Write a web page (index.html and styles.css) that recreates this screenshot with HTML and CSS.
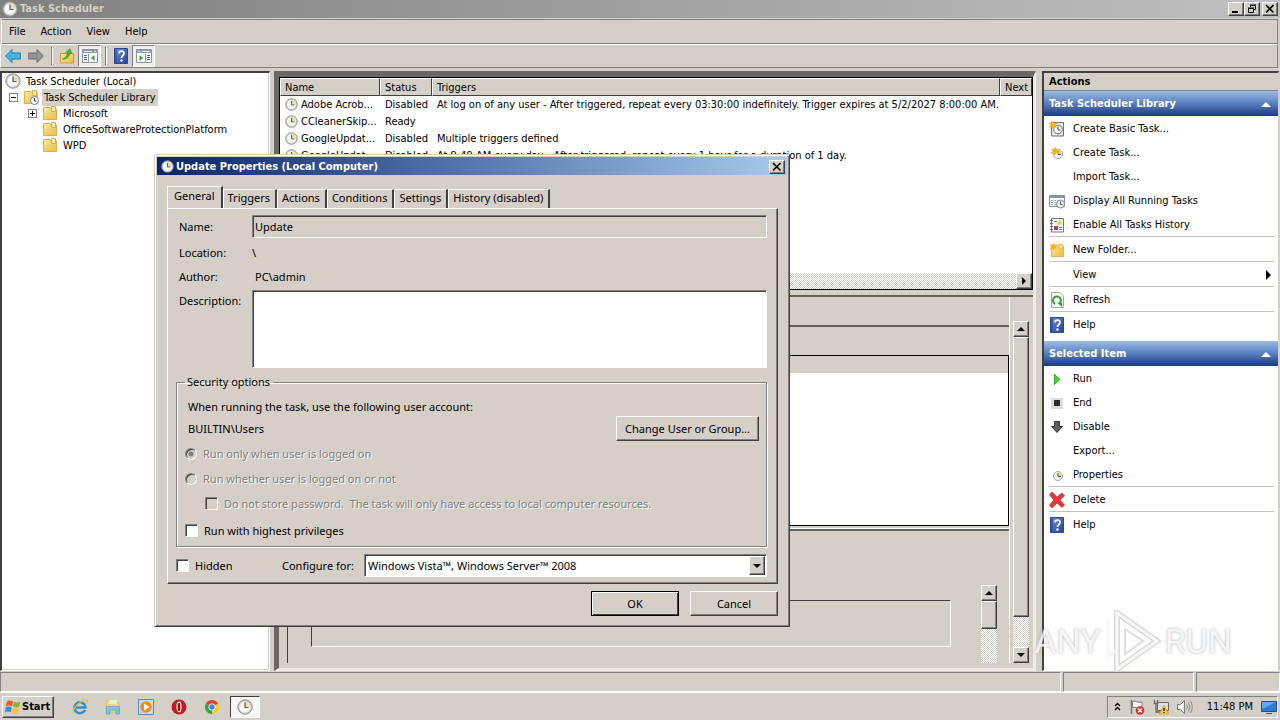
FILE: index.html
```html
<!DOCTYPE html>
<html lang="en">
<head>
    <meta charset="UTF-8">
    <meta name="viewport" content="width=device-width, initial-scale=1.0">
    <title>Task Scheduler</title>
    <link rel="stylesheet" href="styles.css">
</head>
<body>
    <svg class="defs" width="0" height="0" aria-hidden="true">
        <defs>
            <linearGradient id="folderFill" x1="0" y1="0" x2="1" y2="1">
                <stop offset="0" stop-color="#fdeaa0"/>
                <stop offset="1" stop-color="#ecb945"/>
            </linearGradient>
            <linearGradient id="helpFill" x1="0" y1="0" x2="1" y2="1">
                <stop offset="0" stop-color="#6f93dd"/>
                <stop offset="1" stop-color="#1f3f9c"/>
            </linearGradient>
            <symbol id="clock" viewBox="0 0 16 16">
                <circle cx="8" cy="8" r="7.2" fill="#c6c8cb" stroke="#8f9296"/>
                <circle cx="8" cy="8" r="5.6" fill="#f7f8f6"/>
                <path d="M8 8V2.4A5.6 5.6 0 0 1 13.600 8z" fill="#f3dfa0"/>
                <path d="M8 3.500V8.500H11.500" fill="none" stroke="#4d5866" stroke-width="1.200"/>
            </symbol>
            <symbol id="folder" viewBox="0 0 16 16">
                <path d="M1.500 2.500H8L9 4H14.500V14.500H1.500z" fill="url(#folderFill)" stroke="#dcae47"/>
                <path d="M9.500 1.500H13.500V6.500H9.500z" fill="#fbe7a0" stroke="#dcae47"/>
            </symbol>
            <symbol id="help" viewBox="0 0 16 16">
                <path d="M1.500 .5H14.500V15.500H1.500z" fill="url(#helpFill)" stroke="#2b4794"/>
                <path d="M3 1V15" stroke="#223f91"/>
                <path d="M6 5.500C6 2.300 11 2.300 11 5.300C11 7.500 8.500 7.500 8.500 10" fill="none" stroke="#fff" stroke-width="1.800"/>
                <circle cx="8.500" cy="12.500" r="1.200" fill="#fff"/>
            </symbol>
            <symbol id="star" viewBox="0 0 8 8">
                <path d="M4 0L5 2.500L8 2L6 4L8 6.500L5 5.700L4 8L3 5.700L0 6.500L2 4L0 2L3 2.500z" fill="#f6b21b" stroke="#f6b21b" stroke-width=".6"/>
            </symbol>
            <symbol id="pane" viewBox="0 0 16 16">
                <path d="M.5 1.500H15.500V14.500H.5z" fill="#fff" stroke="#8995a5"/>
                <path d="M1 2H15V5H1z" fill="#8b99ad"/>
                <path d="M2 3.500H10M12 3.500H14" stroke="#e9eef5"/>
                <path d="M6.500 6V14" stroke="#8995a5"/>
                <path d="M2 7.500H5M2 9.500H5M2 11.500H5" stroke="#536a8b"/>
                <path d="M12.500 7V13L9 10z" fill="#35a52e"/>
            </symbol>
        </defs>
    </svg>

    <div class="window">
        <header class="titlebar">
            <svg class="icon"><use href="#clock"/></svg>
            <span class="titlebar-text">Task Scheduler</span>
            <button class="caption" aria-label="Minimize"><svg viewBox="0 0 10 10"><path d="M1 7H7V9H1z"/></svg></button>
            <button class="caption" aria-label="Restore"><svg viewBox="0 0 10 10"><path d="M3.500 3V1.500H8.500V5.500H7M3 1H9M1.500 4.500H6.500V8.500H1.500zM1 4H7" fill="none" stroke="#000"/></svg></button>
            <button class="caption caption-close" aria-label="Close"><svg viewBox="0 0 10 10"><path d="M1 1L8.500 8.500M8.500 1L1 8.500" stroke="#000" stroke-width="1.600"/></svg></button>
        </header>

        <nav class="menubar">
            <button>File</button>
            <button>Action</button>
            <button>View</button>
            <button>Help</button>
        </nav>

        <div class="toolbar">
            <button aria-label="Back"><svg class="icon" viewBox="0 0 16 16"><path d="M.7 8L7 1.500V5H15.300V11H7V14.500z" fill="#47b5ea" stroke="#1e78b4"/></svg></button>
            <button aria-label="Forward"><svg class="icon" viewBox="0 0 16 16"><path d="M15.300 8L9 1.500V5H.7V11H9V14.500z" fill="#949494" stroke="#686868"/></svg></button>
            <span class="toolbar-sep"></span>
            <button aria-label="Up"><svg class="icon" viewBox="0 0 16 16"><path d="M1.500 5.500H14.500V15H1.500z" fill="url(#folderFill)" stroke="#cf9f35"/><path d="M3 11C7 10 8 7 8.500 4.500L6.500 4.500L11 .7L13 5.700L11 5C10.500 9 7 12 3 11z" fill="#4bb52f" stroke="#2e8a1d" stroke-width=".5"/></svg></button>
            <button class="pressed" aria-label="Show console tree"><svg class="icon"><use href="#pane"/></svg></button>
            <span class="toolbar-sep"></span>
            <button aria-label="Help"><svg class="icon"><use href="#help"/></svg></button>
            <button class="pressed" aria-label="Show action pane"><svg class="icon flip"><use href="#pane"/></svg></button>
        </div>

        <main class="panes">
            <div class="tree">
                <div class="tree-row"><svg class="icon"><use href="#clock"/></svg><span>Task Scheduler (Local)</span></div>
                <div class="tree-row level-1">
                    <button class="expander" aria-label="Collapse"><svg viewBox="0 0 9 9"><path d="M2 4.500H7" stroke="#000"/></svg></button>
                    <svg class="icon" viewBox="0 0 16 16"><use href="#folder"/><circle cx="11.500" cy="11.500" r="4" fill="#fff" stroke="#74818c"/><path d="M11.500 9V12H13.500" fill="none" stroke="#445"/></svg>
                    <span class="selected">Task Scheduler Library</span>
                </div>
                <div class="tree-row level-2">
                    <button class="expander" aria-label="Expand"><svg viewBox="0 0 9 9"><path d="M2 4.500H7M4.500 2V7" stroke="#000"/></svg></button>
                    <svg class="icon"><use href="#folder"/></svg><span>Microsoft</span>
                </div>
                <div class="tree-row level-3"><svg class="icon"><use href="#folder"/></svg><span>OfficeSoftwareProtectionPlatform</span></div>
                <div class="tree-row level-3"><svg class="icon"><use href="#folder"/></svg><span>WPD</span></div>
            </div>

            <section class="center">
                <div class="task-list">
                    <table>
                        <colgroup><col class="col-name"><col class="col-status"><col><col class="col-next"></colgroup>
                        <thead>
                            <tr><th>Name</th><th>Status</th><th>Triggers</th><th>Next</th></tr>
                        </thead>
                        <tbody>
                            <tr><td><svg class="icon-small"><use href="#clock"/></svg>Adobe Acrob...</td><td>Disabled</td><td>At log on of any user - After triggered, repeat every 03:30:00 indefinitely. Trigger expires at 5/2/2027 8:00:00 AM.</td><td></td></tr>
                            <tr><td><svg class="icon-small"><use href="#clock"/></svg>CCleanerSkip...</td><td>Ready</td><td></td><td></td></tr>
                            <tr><td><svg class="icon-small"><use href="#clock"/></svg>GoogleUpdat...</td><td>Disabled</td><td>Multiple triggers defined</td><td></td></tr>
                            <tr><td><svg class="icon-small"><use href="#clock"/></svg>GoogleUpdat...</td><td>Disabled</td><td>At 9:49 AM every day - After triggered, repeat every 1 hour for a duration of 1 day.</td><td></td></tr>
                        </tbody>
                    </table>
                    <div class="hscroll"><button class="scroll-btn" aria-label="Scroll right"><svg viewBox="0 0 8 8"><path d="M2 0V8L6 4z"/></svg></button></div>
                </div>
                <div class="details">
                    <div class="details-body">
                        <div class="details-head"></div>
                        <div class="details-sheet">
                            <div class="details-box"></div>
                        </div>
                        <div class="details-foot">
                            <div class="foot-box"></div>
                            <div class="vscroll vscroll-short">
                                <button class="scroll-btn" aria-label="Scroll up"><svg viewBox="0 0 8 8"><path d="M0 6H8L4 2z"/></svg></button>
                                <div class="thumb"></div>
                            </div>
                        </div>
                    </div>
                    <div class="vscroll vscroll-long">
                        <button class="scroll-btn" aria-label="Scroll up"><svg viewBox="0 0 8 8"><path d="M0 6H8L4 2z"/></svg></button>
                        <div class="thumb"></div>
                        <button class="scroll-btn" aria-label="Scroll down"><svg viewBox="0 0 8 8"><path d="M0 2H8L4 6z"/></svg></button>
                    </div>
                </div>
            </section>

            <aside class="actions">
                <h2>Actions</h2>
                <h3>Task Scheduler Library<svg viewBox="0 0 10 5"><path d="M0 5H10L5 0z"/></svg></h3>
                <ul>
                    <li><button><svg class="icon" viewBox="0 0 16 16"><path d="M2.500 1.500H14.500V15H2.500z" fill="#e5e5e2" stroke="#77716c"/><circle cx="9" cy="8.500" r="4.300" fill="#fff" stroke="#697885"/><path d="M9 5.500V9H11.500" fill="none" stroke="#445"/><use href="#star" width="8" height="8"/></svg>Create Basic Task...</button></li>
                    <li><button><svg class="icon" viewBox="0 0 16 16"><circle cx="9" cy="9" r="4.500" fill="#f2f5f6" stroke="#9aa9b1"/><path d="M9 9V5A4 4 0 0 1 13 9z" fill="#f3d57a"/><path d="M9 6V9.500H11.500" fill="none" stroke="#445"/><use href="#star" x="2" y="2" width="8" height="8"/></svg>Create Task...</button></li>
                    <li><button><span class="icon"></span>Import Task...</button></li>
                    <li><button><svg class="icon" viewBox="0 0 16 16"><path d="M.5 2.500H15.500V13.500H.5z" fill="#fff" stroke="#8590a0"/><path d="M1 4H15" stroke="#8393ab" stroke-width="2"/><path d="M2 7.500H9M2 9.500H7M2 11.500H7" stroke="#a0a8b0" stroke-dasharray="2 1"/><circle cx="11.500" cy="11" r="4" fill="#eef3ee" stroke="#768690"/><path d="M11.500 8.500V11.500H13.500" fill="none" stroke="#455"/></svg>Display All Running Tasks</button></li>
                    <li><button><svg class="icon" viewBox="0 0 16 16"><path d="M2.500 1.500H14.500V15H2.500z" fill="#f4f5fb" stroke="#6d7496"/><path d="M1 3.500H4M1 6.500H4M1 9.500H4M1 12.500H4" stroke="#5d6791"/><path d="M10.500 2.500L13.500 7.500H7.500z" fill="#f5cf22"/><path d="M5 4.500H8" stroke="#6d7ca9"/><path d="M5 9H9V13H5z" fill="#b0404a"/><path d="M10 10.500H13M10 12.500H13" stroke="#6d7ca9"/></svg>Enable All Tasks History</button></li>
                    <li class="ruled"><button><svg class="icon" viewBox="0 0 16 16"><use href="#folder" x="1" y="1" width="15" height="15"/><use href="#star" y="1" x="1" width="7" height="7"/></svg>New Folder...</button></li>
                    <li class="ruled"><button><span class="icon"></span>View<svg class="submenu" viewBox="0 0 5 10"><path d="M0 0V10L5 5z"/></svg></button></li>
                    <li class="ruled"><button><svg class="icon" viewBox="0 0 16 16"><path d="M2.500 .5H11L14.500 4V15.500H2.500z" fill="#f4faf4" stroke="#a0aba0"/><path d="M6 12A4 4 0 1 1 11 11" fill="none" stroke="#36a33a" stroke-width="2"/><path d="M8 10.500H13V15z" fill="#36a33a"/></svg>Refresh</button></li>
                    <li class="ruled"><button><svg class="icon"><use href="#help"/></svg>Help</button></li>
                </ul>
                <h3>Selected Item<svg viewBox="0 0 10 5"><path d="M0 5H10L5 0z"/></svg></h3>
                <ul>
                    <li><button><svg class="icon" viewBox="0 0 16 16"><path d="M5.500 3.500L11 8.500L5.500 13.500z" fill="#51cf3c" stroke="#2fa527"/></svg>Run</button></li>
                    <li><button><svg class="icon" viewBox="0 0 16 16"><path d="M2 3H14V14H2z" fill="#dcdcdc"/><path d="M5 5H11V11H5z" fill="#2b2b2b"/></svg>End</button></li>
                    <li><button><svg class="icon" viewBox="0 0 16 16"><path d="M5.500 2.500H10.500V7.500H13.500L8 13.500L2.500 7.500H5.500z" fill="#5d5f60" stroke="#333"/></svg>Disable</button></li>
                    <li><button><span class="icon"></span>Export...</button></li>
                    <li><button><svg class="icon" viewBox="0 0 16 16"><circle cx="9" cy="9" r="4.500" fill="#f2f5f6" stroke="#a3abb0"/><path d="M9 9V5A4 4 0 0 1 13 9z" fill="#f3dda0"/><path d="M9 6V9.500H12" fill="none" stroke="#445"/></svg>Properties</button></li>
                    <li class="ruled"><button><svg class="icon" viewBox="0 0 16 16"><path d="M3 0L8 5L13 1L15.500 3.500L11 8L15.500 13L13 15.500L8 11L3 16L.5 13L5 8L.5 3z" fill="#e5383b" stroke="#b71f25" stroke-width=".6"/></svg>Delete</button></li>
                    <li class="ruled"><button><svg class="icon"><use href="#help"/></svg>Help</button></li>
                </ul>
            </aside>
        </main>

        <footer class="statusbar"><span></span><span></span><span></span></footer>
    </div>

    <div class="taskbar">
        <button class="start">
            <svg class="icon" viewBox="0 0 16 16"><path d="M2 2.500Q5 .5 8 2.500L7 7.500Q4 5.500 .8 7.500z" fill="#e8582b"/><path d="M9 2.800Q12 4.500 15.500 2.500L14.300 7.500Q11 9.500 8 7.500z" fill="#7dba32"/><path d="M.6 8.500Q4 6.500 6.800 8.500L5.700 13.500Q3 11.500 0 13.500z" fill="#3d8ad8"/><path d="M7.800 8.800Q11 10.500 14 8.500L12.800 13.500Q9.500 15.500 6.700 13.500z" fill="#f7c32d"/></svg>
            Start
        </button>
        <nav class="quick">
            <button aria-label="Internet Explorer"><svg class="icon" viewBox="0 0 16 16"><path d="M13 11A5.500 5.500 0 1 1 13.500 8.500H4" fill="none" stroke="#2a8fdb" stroke-width="2.500"/><path d="M1.500 15C-1 11 10-1 15 1.500C16 2 15.500 4 14.500 5" fill="none" stroke="#e9bd37" stroke-width="1.300"/></svg></button>
            <button aria-label="Explorer"><svg class="icon" viewBox="0 0 16 16"><path d="M1 2H6L7 4H14V13H1z" fill="#f5d97a" stroke="#dcb851" stroke-width=".7"/><path d="M4 1H12V5H4z" fill="#e8f2c4"/><path d="M1.500 7.500H14.500V15H11V11H5V15H1.500z" fill="#82c4ec" stroke="#4e9fd2" stroke-width=".7"/></svg></button>
            <button aria-label="Media Player"><svg class="icon" viewBox="0 0 16 16"><path d="M.5 .5H15.500V15.500H.5z" fill="#bddcf6" stroke="#4e91cf"/><circle cx="8" cy="8" r="5.800" fill="#f68a1e"/><path d="M6 4.500V11.500L11.500 8z" fill="#fff"/></svg></button>
            <button aria-label="Opera"><svg class="icon" viewBox="0 0 16 16"><circle cx="8" cy="8" r="7.500" fill="#c71721"/><ellipse cx="8" cy="8" rx="2" ry="4.800" fill="#a30c14" stroke="#fff" stroke-width="1.200"/></svg></button>
            <button aria-label="Chrome"><svg class="icon" viewBox="0 0 16 16"><circle cx="8" cy="8" r="7" fill="#f8ca27"/><path d="M8 8L1.900 4.500A7 7 0 0 1 14.100 4.500z" fill="#df4335"/><path d="M8 8L1.900 4.500A7 7 0 0 0 8 15z" fill="#32a350"/><circle cx="8" cy="8" r="3.500" fill="#fff"/><circle cx="8" cy="8" r="2.700" fill="#4285d8"/></svg></button>
            <button class="running" aria-label="Task Scheduler"><svg class="icon"><use href="#clock"/></svg></button>
        </nav>
        <div class="tray">
            <svg class="chevrons" viewBox="0 0 7 9"><path d="M1 4L3.500 1.500L6 4M1 8L3.500 5.500L6 8" fill="none" stroke="#000" stroke-width="1.300"/></svg>
            <svg class="icon" viewBox="0 0 16 16"><path d="M2.500 1V15" stroke="#777" stroke-width="1.500"/><path d="M3.500 2.500C7 1 8 4.500 13 3V9C8 10.500 7 7 3.500 8.500z" fill="#fff" stroke="#777"/><circle cx="11" cy="11.500" r="4.300" fill="#dc2a2e"/><path d="M9 9.500L13 13.500M13 9.500L9 13.500" stroke="#fff" stroke-width="1.500"/></svg>
            <svg class="icon" viewBox="0 0 16 16"><path d="M4.500 3.500H15.500V11.500H4.500z" fill="#ddd" stroke="#666"/><path d="M1.500 1V4.500H4.500V1M3 5V13H7" fill="none" stroke="#666" stroke-width="1.300"/><path d="M11 6.500L16 15H6z" fill="#f5cc1f" stroke="#b68d0c" stroke-width=".5"/><path d="M11 9V12M11 13V14" stroke="#000" stroke-width="1.200"/></svg>
            <svg class="icon" viewBox="0 0 16 16"><path d="M.5 5.500H3.500L7.500 1.500V14.500L3.500 10.500H.5z" fill="#f4f4f4" stroke="#777"/><path d="M9.500 5.500Q11.500 8 9.500 10.500M11.500 3.500Q14.500 8 11.500 12.500M13.500 2Q17 8 13.500 14" fill="none" stroke="#888"/></svg>
            <time>11:48 PM</time>
            <svg class="icon" viewBox="0 0 16 16"><path d="M.5 2.500H15.500V12.500H.5z" fill="#2e7ad8" stroke="#234d8c"/><path d="M1 3H15L1 10z" fill="#68a9ee"/><path d="M5 14.500H11" stroke="#555"/></svg>
        </div>
    </div>

    <div class="dialog" role="dialog" aria-labelledby="dialogTitle">
        <header class="dialog-title">
            <svg class="icon-small"><use href="#clock"/></svg>
            <span id="dialogTitle">Update Properties (Local Computer)</span>
            <button class="caption" aria-label="Close"><svg viewBox="0 0 10 10"><path d="M1 1L8.500 8.500M8.500 1L1 8.500" stroke="#000" stroke-width="1.600"/></svg></button>
        </header>
        <div class="tabs" role="tablist">
            <button class="active" role="tab">General</button>
            <button role="tab">Triggers</button>
            <button role="tab">Actions</button>
            <button role="tab">Conditions</button>
            <button role="tab">Settings</button>
            <button role="tab">History (disabled)</button>
        </div>
        <form class="tab-panel">
            <div class="fields">
                <label for="name">Name:</label>
                <input type="text" id="name" value="Update" readonly>
                <span>Location:</span>
                <span class="location">\</span>
                <span>Author:</span>
                <span class="author">PC\admin</span>
                <label for="description" class="top">Description:</label>
                <textarea id="description"></textarea>
            </div>
            <fieldset>
                <legend>Security options</legend>
                <p>When running the task, use the following user account:</p>
                <div class="account">
                    <span>BUILTIN\Users</span>
                    <button type="button" class="btn">Change User or Group...</button>
                </div>
                <label class="check disabled"><input type="radio" name="logon" checked disabled>Run only when user is logged on</label>
                <label class="check disabled"><input type="radio" name="logon" disabled>Run whether user is logged on or not</label>
                <label class="check disabled nested"><input type="checkbox" disabled>Do not store password.&nbsp; The task will only have access to local computer resources.</label>
                <label class="check last"><input type="checkbox">Run with highest privileges</label>
            </fieldset>
            <div class="configure">
                <label class="check"><input type="checkbox">Hidden</label>
                <label for="configure">Configure for:</label>
                <div class="combo">
                    <select id="configure"><option>Windows Vista™, Windows Server™ 2008</option></select>
                    <span class="combo-arrow"><svg viewBox="0 0 8 8"><path d="M0 2H8L4 6z"/></svg></span>
                </div>
            </div>
        </form>
        <div class="dialog-buttons">
            <button class="btn default">OK</button>
            <button class="btn">Cancel</button>
        </div>
    </div>

    <div class="watermark">
        <span>ANY</span>
        <svg viewBox="0 0 56 62"><path d="M12 3L52 31L12 59z" fill="none" stroke="#d4d4d4" stroke-width="6"/><path d="M12 3L52 31L12 59zM3 10V46L12 40" fill="none" stroke="#f6f6f6" stroke-width="3"/><path d="M20 19V44L38 31z" fill="none" stroke="#d8d8d8" stroke-width="2"/></svg>
        <span>RUN</span>
    </div>
</body>
</html>
```
FILE: styles.css
```css
:root {
    --face: #d4d0c8;
    --dark: #404040;
    --shadow: #808080;
    --track: repeating-conic-gradient(#fff 0 25%, #d4d0c8 0 50%) 0 0 / 2px 2px;
    --ui: "DejaVu Sans Condensed", "DejaVu Sans", sans-serif;
    --dialog: "Noto Sans", "Open Sans", sans-serif;
}
* {
    box-sizing: border-box;
}
body {
    margin: 0;
    height: 100vh;
    display: flex;
    flex-direction: column;
    overflow: hidden;
    background: var(--face);
    color: #000;
    font: 11px/16px var(--ui);
}
button {
    font: inherit;
    color: inherit;
    padding: 0;
    border: 0;
    background: none;
}
.defs {
    position: absolute;
}
.icon {
    width: 16px;
    height: 16px;
    flex: none;
}
.icon-small {
    width: 13px;
    height: 13px;
    flex: none;
}
.flip {
    transform: scaleX(-1);
}
.window {
    flex: 1;
    min-height: 0;
    display: flex;
    flex-direction: column;
}

/* title bar */
.titlebar {
    height: 18px;
    display: flex;
    align-items: center;
    padding: 0 2px;
    background: linear-gradient(90deg, #808080, #c0c0c0);
    color: #d4d0c8;
    font-weight: bold;
}
.titlebar-text {
    flex: 1;
    padding-left: 2px;
}
.caption {
    width: 16px;
    height: 14px;
    display: flex;
    align-items: center;
    justify-content: center;
    background: var(--face);
    border: 1px solid;
    border-color: #fff var(--dark) var(--dark) #fff;
    box-shadow: inset -1px -1px var(--shadow);
}
.caption svg {
    width: 10px;
    height: 10px;
}
.caption-close {
    margin-left: 2px;
}

/* menu and toolbar */
.menubar {
    height: 25px;
    display: flex;
    align-items: center;
    margin: 1px 2px 0 1px;
    padding-top: 1px;
    border: 1px solid;
    border-color: var(--shadow) var(--shadow) var(--shadow) #fff;
}
.menubar button {
    padding: 0 8px 0 7px;
}
.toolbar {
    height: 24px;
    display: flex;
    align-items: center;
    margin: 0 2px 0 0;
    border: 1px solid;
    border-color: #fff var(--shadow) var(--shadow) #fff;
}
.toolbar button {
    width: 23px;
    height: 22px;
    display: flex;
    align-items: center;
    justify-content: center;
}
.toolbar .pressed {
    background: #f0eeea;
    border: 1px solid;
    border-color: var(--shadow) #fff #fff var(--shadow);
}
.toolbar-sep {
    width: 2px;
    height: 18px;
    margin: 0 2px 0 4px;
    border-left: 1px solid var(--shadow);
    border-right: 1px solid #fff;
}

/* panes */
.panes {
    flex: 1;
    min-height: 0;
    display: grid;
    grid-template-columns: 270px 1fr 237px;
    column-gap: 4px;
    margin-top: 3px;
    padding-right: 1px;
}
.tree {
    background: #fff;
    border: solid;
    border-width: 2px 1px 1px 2px;
    border-color: var(--dark) #fff #fff var(--dark);
    box-shadow: inset -1px -1px var(--face);
}
.tree-row {
    height: 16px;
    display: flex;
    align-items: center;
    gap: 3px;
    padding-left: 3px;
}
.tree-row span {
    padding: 1px 2px 0;
}
.tree-row .selected {
    background: var(--face);
}
.level-1 {
    padding-left: 7px;
}
.level-2 {
    padding-left: 26px;
}
.level-3 {
    padding-left: 40px;
}
.expander {
    width: 9px;
    height: 9px;
    margin-right: 2px;
    display: flex;
    background: #fff;
    outline: 1px solid var(--shadow);
    outline-offset: -1px;
}
.center {
    min-width: 0;
    display: flex;
    flex-direction: column;
    gap: 5px;
    border: solid;
    border-width: 6px 3px 3px 5px;
    border-color: #6a6866 #efedea #efedea #6a6866;
    margin-right: 2px;
}
.task-list {
    height: 213px;
    display: flex;
    flex-direction: column;
    background: #fff;
    border: 1px solid #000;
}
.task-list table {
    width: 100%;
    table-layout: fixed;
    border-collapse: separate;
    border-spacing: 0;
}
.col-name {
    width: 100px;
}
.col-status {
    width: 52px;
}
.col-next {
    width: 32px;
}
.task-list th {
    height: 17px;
    padding: 1px 4px 0;
    text-align: left;
    font-weight: normal;
    line-height: 15px;
    background: var(--face);
    border: 1px solid;
    border-color: #fff var(--dark) var(--dark) #fff;
}
.task-list td {
    height: 17px;
    padding: 0 5px;
    white-space: nowrap;
    overflow: hidden;
}
.task-list .icon-small {
    margin-right: 3px;
    vertical-align: -3px;
}
.hscroll {
    height: 16px;
    margin-top: auto;
    display: flex;
    justify-content: flex-end;
    background: var(--track);
}
.scroll-btn {
    width: 16px;
    height: 16px;
    flex: none;
    display: flex;
    align-items: center;
    justify-content: center;
    background: var(--face);
    border: 1px solid;
    border-color: #fff var(--dark) var(--dark) #fff;
    box-shadow: inset -1px -1px var(--shadow);
}
.scroll-btn svg {
    width: 8px;
    height: 8px;
}
.details {
    flex: 1;
    min-height: 0;
    display: flex;
    padding: 0 4px 5px 8px;
    border-top: 2px solid #62605c;
}
.details-body {
    flex: 1;
    display: flex;
    flex-direction: column;
    border-left: 1px solid var(--dark);
    border-right: 1px solid #fff;
    margin-right: 3px;
}
.details-head {
    height: 30px;
    border-bottom: 2px solid #62605c;
}
.details-sheet {
    height: 202px;
    padding-top: 28px;
    border-bottom: 1px solid #fff;
}
.details-box {
    height: 171px;
    background: #fff;
    border: 1px solid #000;
    box-shadow: inset 0 17px #d6cfc8;
}
.details-foot {
    flex: 1;
    display: flex;
    justify-content: space-between;
    gap: 30px;
    padding: 54px 12px 0 23px;
    border-top: 2px solid #62605c;
}
.foot-box {
    flex: 1;
    height: 47px;
    margin-top: 15px;
    border: 1px solid;
    border-color: var(--dark) #fff #fff var(--dark);
}
.vscroll {
    width: 16px;
    display: flex;
    flex-direction: column;
    background: var(--track);
}
.thumb {
    background: var(--face);
    border: 1px solid;
    border-color: #fff var(--dark) var(--dark) #fff;
    box-shadow: inset -1px -1px var(--shadow);
}
.vscroll-long {
    margin-top: 24px;
}
.vscroll-long .thumb {
    flex: 1;
    margin-bottom: 30px;
}
.vscroll-short .thumb {
    height: 28px;
}

/* actions pane */
.actions {
    background: #fff;
    border: solid;
    border-width: 2px 1px 1px 2px;
    border-color: var(--dark) var(--face) #fff var(--dark);
}
.actions h2,
.actions h3 {
    margin: 0;
    font-size: 11px;
    padding-left: 5px;
}
.actions h2 {
    height: 18px;
    padding-top: 1px;
    background: var(--face);
    border-bottom: 1px solid var(--shadow);
}
.actions h3 {
    height: 25px;
    display: flex;
    align-items: center;
    justify-content: space-between;
    padding-top: 1px;
    padding-right: 7px;
    color: #fff;
    background: linear-gradient(#9dbce6, #5f86c2 45%, #1c3a80);
}
.actions h3 svg {
    width: 10px;
    height: 5px;
    fill: #fff;
}
.actions ul {
    list-style: none;
    margin: 0 4px 5px 5px;
    padding: 0;
}
.actions li button {
    width: 100%;
    height: 24px;
    display: flex;
    align-items: center;
    gap: 8px;
    padding-top: 1px;
}
.actions .ruled {
    border-top: 1px solid #c6c3bc;
}
.submenu {
    width: 5px;
    height: 10px;
    margin-left: auto;
    margin-right: 3px;
}

/* status bar and taskbar */
.statusbar {
    height: 21px;
    margin-top: 1px;
    display: grid;
    grid-template-columns: 1fr 131px 84px;
    gap: 2px;
    border-bottom: 1px solid #fff;
}
.statusbar span {
    border: 1px solid;
    border-color: var(--shadow) #fff #fff var(--shadow);
}
.taskbar {
    height: 27px;
    display: flex;
    align-items: center;
    padding: 1px 2px;
}
.start {
    height: 22px;
    display: flex;
    align-items: center;
    gap: 1px;
    padding: 0 3px 0 2px;
    font-weight: bold;
    border: 1px solid;
    border-color: #fff var(--dark) var(--dark) #fff;
    box-shadow: inset -1px -1px var(--shadow);
}
.quick {
    display: flex;
    gap: 3px;
    margin-left: 11px;
}
.quick button {
    width: 30px;
    height: 22px;
    display: flex;
    align-items: center;
    justify-content: center;
}
.quick .running {
    background: #f7f6f4;
    border: 1px solid;
    border-color: var(--dark) #fff #fff var(--dark);
}
.tray {
    height: 22px;
    margin-left: auto;
    display: flex;
    align-items: center;
    gap: 8px;
    padding: 0 0 0 6px;
    border: 1px solid;
    border-color: var(--shadow) #fff #fff var(--shadow);
}
.tray time {
    padding-left: 6px;
}
.chevrons {
    width: 7px;
    height: 9px;
}

/* properties dialog */
.dialog {
    position: absolute;
    left: 154px;
    top: 154px;
    width: 636px;
    padding: 2px;
    background: #d6cfc8;
    border: 1px solid;
    border-color: var(--face) var(--dark) var(--dark) var(--face);
    box-shadow: inset 1px 1px #fff, inset -1px -1px var(--shadow);
    font-family: var(--dialog);
}
.dialog-title {
    height: 18px;
    display: flex;
    align-items: center;
    gap: 2px;
    padding: 1px 2px 0 4px;
    background: linear-gradient(90deg, #0a246a, #a6caf0);
    color: #fff;
    font-family: var(--ui);
    font-weight: bold;
}
.dialog-title span {
    flex: 1;
}
.tabs {
    display: flex;
    align-items: flex-end;
    padding: 11px 0 0 10px;
}
.tabs button {
    height: 19px;
    padding: 0 5px 2px 4px;
    border: solid;
    border-width: 1px 2px 0 1px;
    border-color: #fff var(--dark) #fff #fff;
}
.tabs .active {
    height: 22px;
    padding: 0 6px 3px;
}
.tab-panel {
    margin: 0 9px 0 10px;
    padding: 6px 10px 5px 8px;
    border: 1px solid;
    border-color: #fff var(--dark) var(--dark) #fff;
    box-shadow: inset -1px -1px var(--shadow);
}
.fields {
    display: grid;
    grid-template-columns: 73px 1fr;
    grid-template-rows: 23px 30px 18px 82px;
    align-items: center;
    padding-left: 3px;
}
.fields .author {
    padding-left: 3px;
}
.fields input,
.fields textarea {
    width: 100%;
    height: 100%;
    margin: 0;
    padding: 0 2px;
    resize: none;
    font: inherit;
    background: #fff;
    border: 1px solid;
    border-color: var(--shadow) #fff #fff var(--shadow);
    box-shadow: inset 1px 1px var(--dark);
}
.fields input {
    background: transparent;
}
.fields textarea {
    height: 78px;
    align-self: end;
}
.fields .top {
    align-self: start;
    padding-top: 7px;
}
fieldset {
    margin: 6px 0 0;
    padding: 9px 7px 3px 8px;
    border: 1px solid var(--shadow);
    box-shadow: 1px 1px #fff, inset 1px 1px #fff;
}
legend {
    padding: 0 3px 0 2px;
}
fieldset p {
    margin: 0 0 1px 3px;
}
.account {
    display: flex;
    justify-content: space-between;
    align-items: center;
    padding-left: 3px;
}
.btn {
    height: 25px;
    padding: 0 8px;
    border: 1px solid;
    border-color: #fff var(--dark) var(--dark) #fff;
    box-shadow: inset -1px -1px var(--shadow);
}
.check {
    height: 25px;
    display: flex;
    align-items: center;
    gap: 6px;
}
.check input {
    appearance: none;
    width: 13px;
    height: 13px;
    margin: 0;
    background: #fff;
    border: 1px solid;
    border-color: var(--shadow) #fff #fff var(--shadow);
    box-shadow: inset 1px 1px var(--dark);
}
.check input[type="radio"] {
    width: 12px;
    height: 12px;
    border-radius: 50%;
}
.check input:disabled {
    background: #d6cfc8;
}
.check input[type="radio"]:checked {
    background: radial-gradient(circle, #808080 2px, #d6cfc8 3px);
}
.disabled {
    color: #808080;
    text-shadow: 1px 1px #fff;
}
.nested {
    padding-left: 20px;
}
.last {
    margin-top: 2px;
}
.configure {
    display: flex;
    align-items: center;
    margin-top: 6px;
}
.configure .check {
    width: 106px;
}
.combo {
    flex: 1;
    height: 23px;
    margin-left: 10px;
    display: flex;
    background: #fff;
    border: 1px solid;
    border-color: var(--shadow) #fff #fff var(--shadow);
    box-shadow: inset 1px 1px var(--dark);
    padding: 1px;
}
.combo select {
    flex: 1;
    appearance: none;
    border: 0;
    padding: 0 2px;
    font: inherit;
    color: inherit;
    background: none;
}
.combo-arrow {
    width: 16px;
    display: flex;
    align-items: center;
    justify-content: center;
    background: var(--face);
    border: 1px solid;
    border-color: #fff var(--dark) var(--dark) #fff;
    box-shadow: inset -1px -1px var(--shadow);
}
.combo-arrow svg {
    width: 8px;
    height: 8px;
}
.dialog-buttons {
    display: flex;
    justify-content: flex-end;
    gap: 11px;
    padding: 7px 9px 8px;
}
.dialog-buttons .btn {
    width: 88px;
}
.dialog-buttons .default {
    border-color: #000;
    box-shadow: inset 1px 1px #fff, inset -1px -1px var(--dark);
}

/* recorder watermark */
.watermark {
    position: absolute;
    right: 48px;
    bottom: 48px;
    display: flex;
    align-items: center;
    gap: 4px;
    font: 34px/62px Roboto, sans-serif;
    color: #f4f4f4;
    text-shadow: 0 0 3px #a8a8a8;
    opacity: .85;
    pointer-events: none;
}
.watermark svg {
    width: 56px;
    height: 62px;
}
```
